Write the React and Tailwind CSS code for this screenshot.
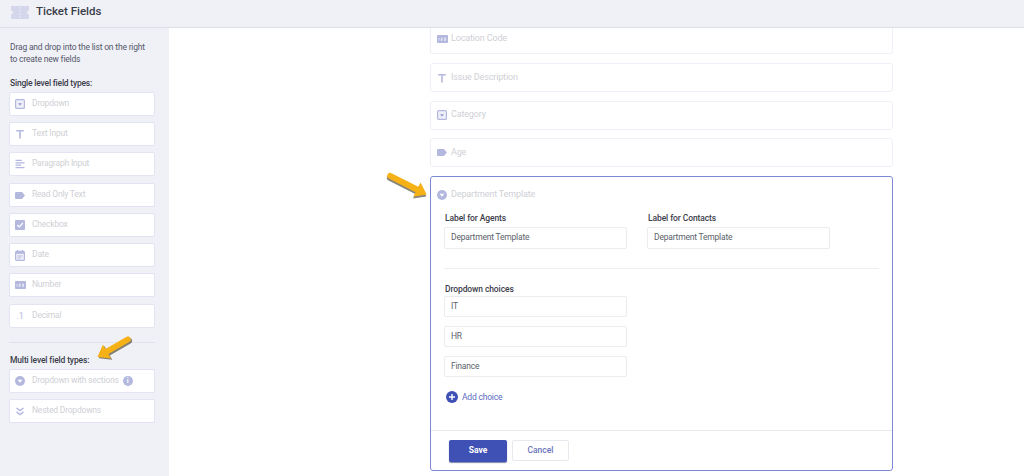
import React from "react";

const I = "#b4b8de";

function Dropdown() {
  return <svg width="10" height="10" viewBox="0 0 10 10"><rect x="0.6" y="0.6" width="8.8" height="8.8" rx="1" fill="#eef0f9" stroke={I} strokeWidth="1.2"/><path d="M3 4.2h4L5 6.4z" fill="#8f94c8"/></svg>;
}
function TextI() {
  return <svg width="10" height="10" viewBox="0 0 10 10"><path d="M1.2 1h7.6v1.6H5.8V9.4H4.2V2.6H1.2z" fill={I}/></svg>;
}
function Para() {
  return <svg width="10" height="10" viewBox="0 0 10 10"><path d="M0.5 0.8h6.5v1.2H0.5zM0.5 3.2h9v1.2h-9zM0.5 5.6h5.5v1.2H0.5zM0.5 8h9v1.2h-9z" fill={I}/></svg>;
}
function Tag() {
  return <svg width="10" height="7" viewBox="0 0 10 7"><path d="M1 0h6l3 3.5L7 7H1a1 1 0 0 1-1-1V1a1 1 0 0 1 1-1z" fill={I}/></svg>;
}
function Check() {
  return <svg width="10" height="10" viewBox="0 0 10 10"><rect width="10" height="10" rx="1" fill={I}/><path d="M2.3 5l2 2 3.6-4" fill="none" stroke="#fff" strokeWidth="1.2"/></svg>;
}
function DateI() {
  return <svg width="10" height="11" viewBox="0 0 10 11"><rect x="0.6" y="1.4" width="8.8" height="9" rx="1" fill="#eef0f9" stroke={I} strokeWidth="1.2"/><path d="M0.6 2h8.8v1.8H0.6z" fill={I}/><path d="M2.5 0v2M7.5 0v2" stroke={I} strokeWidth="1.2"/><path d="M2.5 5.6h5v1h-5zM2.5 7.4h3.4v1H2.5z" fill={I}/></svg>;
}
function Num() {
  return <svg width="11" height="8" viewBox="0 0 11 8"><rect width="11" height="8" rx="0.8" fill={I}/><path d="M2 3v2.4M4 3h1.4v1.2H4v1.2h1.4M7 3h1.6v2.4H7M7 4.2h1.6" fill="none" stroke="#fff" strokeWidth="0.6"/></svg>;
}
function Dec() {
  return <span className="text-[9px] leading-none text-[#b4b8de]">.1</span>;
}
function Sections() {
  return <svg width="10" height="10" viewBox="0 0 10 10"><circle cx="5" cy="5" r="5" fill={I}/><path d="M2.6 3.8h4.8L5 6.8z" fill="#fff"/></svg>;
}
function Nested() {
  return <svg width="10" height="9" viewBox="0 0 10 9"><path d="M1.5 1L5 3.6 8.5 1M1.5 4.8L5 7.6l3.5-2.8" fill="none" stroke={I} strokeWidth="1.5"/></svg>;
}

function SideItem({ icon, label, extra, mb = "mb-[6px]" }) {
  return (
    <div className={`h-[24px] w-[146px] bg-white border border-[#e2e3f3] rounded-[2px] flex items-center shrink-0 ${mb}`}>
      <span className="w-[12px] ml-[4px] mr-[6px] flex justify-center shrink-0 items-center">{icon}</span>
      <span className="pb-[1px] text-[8.5px] tracking-[-0.2px] text-[#cfd0d6]">{label}</span>
      {extra}
    </div>
  );
}

function FieldCard({ icon, label, h, mb = "mb-[9px]", cut, pb = "" }) {
  return (
    <div className={`${h} ${mb} ${pb} bg-white border border-[#eff0f7] ${cut ? "border-t-0 rounded-b-[3px]" : "rounded-[3px]"} flex items-center shrink-0`}>
      <span className="w-[14px] ml-[4px] mr-[2px] flex justify-center items-center shrink-0">{icon}</span>
      <span className="text-[9px] tracking-[-0.15px] text-[#cfd0d6]">{label}</span>
    </div>
  );
}

function Input({ value, h = "h-[22px]" }) {
  return (
    <div className={`${h} w-[183px] bg-white border border-[#ebebf0] rounded-[2px] flex items-center pl-[6px] pb-[1px] text-[8.5px] tracking-[-0.2px] text-[#5c5f6b]`}>{value}</div>
  );
}

function Arrow({ className, rot, len }) {
  const tip = len + 2;
  const neck = len - 9;
  const d = `M5 9 L${neck} 9 L${neck} 4 L${tip} 12 L${neck} 20 L${neck} 15 L5 15 A3 3 0 0 1 5 9 Z`;
  return (
    <svg className={className} width={len + 6} height="24" viewBox={`0 0 ${len + 6} 24`} style={{ transform: `rotate(${rot}deg)` }}>
      <path d={d} fill="#3a3320" fillOpacity="0.6" transform={rot > 90 ? "translate(-0.5 -1.8)" : "translate(0.6 1.8)"}/>
      <path d={d} fill="#f5b116"/>
    </svg>
  );
}

export default function App() {
  return (
    <div className="relative w-[1024px] h-[476px] overflow-hidden bg-white flex flex-col" style={{ fontFamily: "Roboto, 'Noto Sans', sans-serif" }}>
      <header className="h-[28px] shrink-0 bg-[#f0f1f7] border-b border-[#dcdde9] flex items-center pl-[11px] pb-[3px]">
        <svg width="18" height="13" viewBox="0 0 18 13">
          <path d="M1 0h16a1 1 0 0 1 1 1v3.4a2.1 2.1 0 0 0 0 4.2V12a1 1 0 0 1-1 1H1a1 1 0 0 1-1-1V8.6a2.1 2.1 0 0 0 0-4.2V1a1 1 0 0 1 1-1z" fill="#d4d6ec"/>
          <path d="M9 1v11" stroke="#f0f1f7" strokeWidth="1" strokeDasharray="1.5 1.5"/>
        </svg>
        <span className="ml-[7px] text-[11.5px] font-medium text-[#3b3d4a]">Ticket Fields</span>
      </header>
      <div className="flex flex-1 min-h-0">
        <aside className="w-[169px] shrink-0 bg-[#f0f1f7] flex flex-col pl-[9px] pt-[13px]">
          <p className="ml-[1px] text-[8.5px] tracking-[-0.18px] leading-[12px] text-[#55576a]">Drag and drop into the list on the right<br/>to create new fields</p>
          <p className="ml-[1px] mt-[12px] mb-[3px] text-[8.5px] tracking-[-0.2px] leading-[12px] font-medium text-[#3b3d4a]">Single level field types:</p>
          <SideItem icon={<Dropdown/>} label="Dropdown"/>
          <SideItem icon={<TextI/>} label="Text Input"/>
          <SideItem icon={<Para/>} label="Paragraph Input" mb="mb-[7px]"/>
          <SideItem icon={<Tag/>} label="Read Only Text"/>
          <SideItem icon={<Check/>} label="Checkbox"/>
          <SideItem icon={<DateI/>} label="Date"/>
          <SideItem icon={<Num/>} label="Number" mb="mb-[7px]"/>
          <SideItem icon={<Dec/>} label="Decimal" mb="mb-0"/>
          <div className="w-[146px] h-px bg-[#e0e1ec] mt-[14px]"/>
          <p className="ml-[1px] mt-[11px] mb-[3px] text-[8.5px] tracking-[-0.15px] leading-[12px] font-medium text-[#3b3d4a]">Multi level field types:</p>
          <SideItem icon={<Sections/>} label="Dropdown with sections" extra={
            <span className="ml-[4px] w-[10px] h-[10px] rounded-full bg-[#b4b8de] text-white text-[7px] font-bold flex items-center justify-center">i</span>
          }/>
          <SideItem icon={<Nested/>} label="Nested Dropdowns"/>
        </aside>
        <main className="flex-1 pl-[261px]">
          <div className="w-[463px] flex flex-col">
            <FieldCard cut h="h-[26px]" pb="pb-[4px]" icon={<Num/>} label="Location Code"/>
            <FieldCard h="h-[29px]" icon={<TextI/>} label="Issue Description"/>
            <FieldCard h="h-[29px]" pb="pb-[1px]" mb="mb-[8px]" icon={<Dropdown/>} label="Category"/>
            <FieldCard h="h-[29px]" icon={<Tag/>} label="Age"/>
            <section className="h-[295px] border border-[#7c88d4] rounded-[3px] bg-white flex flex-col shrink-0">
              <div className="h-[35px] flex items-center shrink-0">
                <span className="w-[14px] ml-[4px] mr-[2px] flex justify-center"><Sections/></span>
                <span className="text-[9px] tracking-[-0.15px] text-[#cfd0d6]">Department Template</span>
              </div>
              <div className="flex pl-[13px] gap-[20px]">
                <div className="w-[183px]">
                  <div className="ml-[1px] text-[8.5px] tracking-[-0.1px] leading-[12px] font-medium text-[#3b3d4a] mb-[3px]">Label for Agents</div>
                  <Input value="Department Template"/>
                </div>
                <div className="w-[183px]">
                  <div className="ml-[1px] text-[8.5px] tracking-[-0.1px] leading-[12px] font-medium text-[#3b3d4a] mb-[3px]">Label for Contacts</div>
                  <Input value="Department Template"/>
                </div>
              </div>
              <div className="ml-[13px] w-[435px] h-px bg-[#eeeef2] mt-[19px]"/>
              <div className="pl-[13px] mt-[14px]">
                <div className="ml-[1px] text-[8.5px] tracking-[-0.1px] leading-[12px] font-medium text-[#3b3d4a] mb-[1px]">Dropdown choices</div>
                <div className="flex flex-col gap-[9px] w-[183px]">
                  <Input value="IT" h="h-[21px]"/>
                  <Input value="HR" h="h-[21px]"/>
                  <Input value="Finance" h="h-[21px]"/>
                </div>
                <div className="flex items-center mt-[14px] ml-[2px]">
                  <span className="w-[12px] h-[12px] rounded-full bg-[#3f51b5] flex items-center justify-center">
                    <svg width="8" height="8" viewBox="0 0 8 8"><path d="M4 1v6M1 4h6" stroke="#fff" strokeWidth="1.4"/></svg>
                  </span>
                  <span className="ml-[4px] text-[8.5px] tracking-[-0.2px] text-[#5c6bc0]">Add choice</span>
                </div>
              </div>
              <div className="mt-auto h-[40px] border-t border-[#e8e8ee] flex items-center pl-[18px] gap-[5px] shrink-0">
                <button className="w-[58px] h-[22px] bg-[#3f51b5] rounded-[2px] text-white text-[8.5px] font-bold shadow-[0_1px_1px_rgba(40,50,110,0.6)]">Save</button>
                <button className="w-[57px] h-[21px] bg-white border border-[#e8e8ee] rounded-[2px] text-[#6b74b8] text-[8.5px] font-medium">Cancel</button>
              </div>
            </section>
          </div>
        </main>
      </div>
      <Arrow className="absolute left-[383px] top-[173px]" rot={27} len={44}/>
      <Arrow className="absolute left-[91px] top-[336px]" rot={150} len={38}/>
    </div>
  );
}
